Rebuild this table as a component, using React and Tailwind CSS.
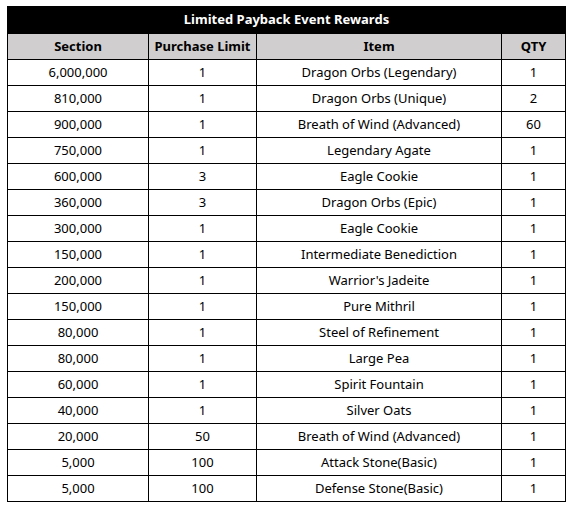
import React from 'react';

const rows = [
  ['6,000,000', '1', 'Dragon Orbs (Legendary)', '1'],
  ['810,000', '1', 'Dragon Orbs (Unique)', '2'],
  ['900,000', '1', 'Breath of Wind (Advanced)', '60'],
  ['750,000', '1', 'Legendary Agate', '1'],
  ['600,000', '3', 'Eagle Cookie', '1'],
  ['360,000', '3', 'Dragon Orbs (Epic)', '1'],
  ['300,000', '1', 'Eagle Cookie', '1'],
  ['150,000', '1', 'Intermediate Benediction', '1'],
  ['200,000', '1', "Warrior's Jadeite", '1'],
  ['150,000', '1', 'Pure Mithril', '1'],
  ['80,000', '1', 'Steel of Refinement', '1'],
  ['80,000', '1', 'Large Pea', '1'],
  ['60,000', '1', 'Spirit Fountain', '1'],
  ['40,000', '1', 'Silver Oats', '1'],
  ['20,000', '50', 'Breath of Wind (Advanced)', '1'],
  ['5,000', '100', 'Attack Stone(Basic)', '1'],
  ['5,000', '100', 'Defense Stone(Basic)', '1'],
];

const App = () => {
  return (
    <div className="w-[572px] h-[507px] bg-white pt-[6px] pl-[7px] font-['Noto_Sans',sans-serif] text-[13px] text-black">
      <table className="border-collapse table-fixed w-[558px]">
        <colgroup>
          <col className="w-[141px]" />
          <col className="w-[108px]" />
          <col className="w-[245px]" />
          <col className="w-[64px]" />
        </colgroup>
        <thead>
          <tr className="h-[27px]">
            <th colSpan={4} className="bg-black text-white font-bold border border-black p-0">
              Limited Payback Event Rewards
            </th>
          </tr>
          <tr className="h-[26px]">
            {['Section', 'Purchase Limit', 'Item', 'QTY'].map(h => (
              <th key={h} className="bg-[#d0cece] font-bold border border-black p-0">{h}</th>
            ))}
          </tr>
        </thead>
        <tbody>
          {rows.map((r, i) => (
            <tr key={i} className="h-[26px]">
              {r.map((c, j) => (
                <td key={j} className="border border-black text-center p-0">{c}</td>
              ))}
            </tr>
          ))}
        </tbody>
      </table>
    </div>
  );
};

export default App;
